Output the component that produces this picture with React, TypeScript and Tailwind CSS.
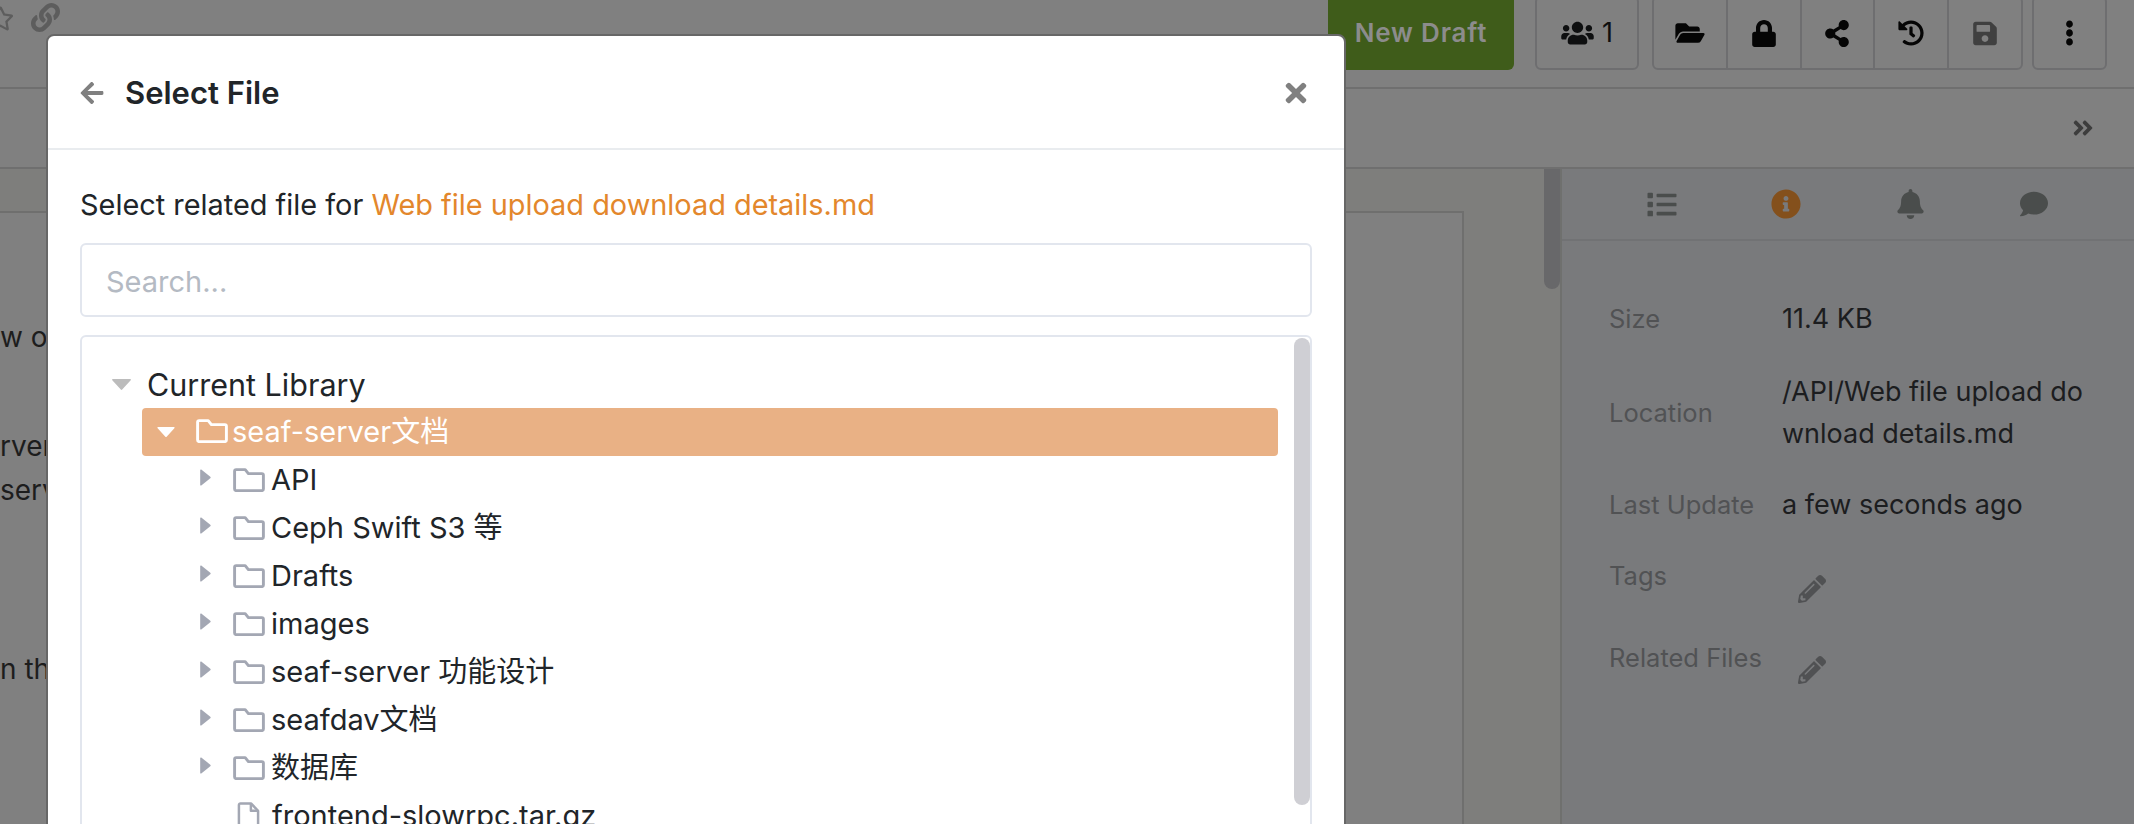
import React from "react";
import {
  FaRegStar, FaLink, FaUsers, FaFolderOpen, FaLock, FaShareAlt, FaHistory, FaSave, FaEllipsisV,
  FaAngleDoubleRight, FaList, FaInfoCircle, FaBell, FaComment, FaPencilAlt, FaArrowLeft, FaTimes,
} from "react-icons/fa";

const FONT = "font-['Inter','Noto_Sans_CJK_SC',sans-serif]";

function Folder({ className }: { className: string }) {
  return (
    <svg viewBox="0 0 32 24" className={className} fill="none" stroke="currentColor" strokeWidth="2.9" strokeLinejoin="round">
      <path d="M1.6 21V3.2c0-.9.7-1.6 1.6-1.6h9l3.2 4h13.4c.9 0 1.6.7 1.6 1.6V21c0 .9-.7 1.6-1.6 1.6H3.2c-.9 0-1.6-.7-1.6-1.6z" />
    </svg>
  );
}

function FileIcon() {
  return (
    <svg viewBox="0 0 24 30" className="w-[23px] h-[29px] text-[#a3a7b3]" fill="none" stroke="currentColor" strokeWidth="2.6" strokeLinejoin="round">
      <path d="M2 3c0-.9.7-1.6 1.6-1.6h11L22 9v18c0 .9-.7 1.6-1.6 1.6H3.600c-.9 0-1.6-.7-1.600-1.600z" />
      <path d="M14.500 1.500V9H22" />
    </svg>
  );
}

function CaretRight() {
  return (
    <svg viewBox="0 0 10 16" className="w-[11px] h-[17px] text-[#a3a7b3] -mt-[6px] shrink-0" fill="currentColor">
      <path d="M1 0.5 9.500 7.200c.5.400.5 1.200 0 1.600L1 15.500c-.4.300-1 0-1-.5V1c0-.5.600-.8 1-.5z" />
    </svg>
  );
}

function CaretDown({ className }: { className: string }) {
  return (
    <svg viewBox="0 0 19 11" className={className} fill="currentColor">
      <path d="M0.800 0h17.400c.7 0 1 .8.500 1.300l-8.500 9.300c-.4.400-1 .4-1.400 0L.300 1.300C-.200.800.100 0 .800 0z" />
    </svg>
  );
}

function TreeFolder({ name }: { name: string }) {
  return (
    <div className="flex items-center h-[48px] pl-[118px]">
      <CaretRight />
      <Folder className="w-[32px] h-[24px] ml-[22px] text-[#a3a7b3] shrink-0" />
      <span className="ml-[6px] text-[#212529]">{name}</span>
    </div>
  );
}

function ToolBtn({ children, border = true }: { children: React.ReactNode; border?: boolean }) {
  return (
    <div className={`flex-1 flex items-center justify-center ${border ? "border-r-2 border-[#6e6e70]" : ""}`}>
      {children}
    </div>
  );
}

function Detail({ label, children, className }: { label: string; children: React.ReactNode; className: string }) {
  return (
    <div className={`flex ${className}`}>
      <div className="w-[173px] shrink-0 text-[#515254] text-[25.500px]">{label}</div>
      <div className="flex-1 text-[#1c1d1f] text-[27px]">{children}</div>
    </div>
  );
}

export default function App() {
  return (
    <div className={`relative w-[2134px] h-[824px] overflow-hidden bg-[#808080] flex flex-col text-[29px] leading-[42px] ${FONT}`}>
      {/* Page header */}
      <header className="h-[89px] shrink-0 border-b-2 border-[#6f6f6f] flex items-end justify-between pb-[17px] pr-[27px]">
        <div className="self-start flex items-center gap-[17px] -ml-[13px] mt-[2px] text-[#5d5d5d]">
          <FaRegStar className="w-[27px] h-[27px] mt-[3px]" />
          <FaLink className="w-[29px] h-[29px]" />
        </div>
        <div className="flex items-end h-[74px]">
          <div className="w-[186px] h-[74px] bg-[#3f5c1a] rounded-b-[6px] flex items-center justify-center font-semibold text-[#8c8c8c] tracking-[0.8px] text-[26px]">
            New Draft
          </div>
          <div className="w-[104px] h-[74px] ml-[21px] border-2 border-[#6e6e70] rounded-[6px] flex items-center justify-center gap-[8px] text-[#0e0f10] text-[27px]">
            <FaUsers className="w-[33px] h-[26px]" />
            <span>1</span>
          </div>
          <div className="w-[371px] h-[74px] ml-[13px] border-2 border-[#6e6e70] rounded-[6px] flex text-[#050505]">
            <ToolBtn><FaFolderOpen className="w-[30px] h-[26px]" /></ToolBtn>
            <ToolBtn><FaLock className="w-[24px] h-[27px]" /></ToolBtn>
            <ToolBtn><FaShareAlt className="w-[24px] h-[27px]" /></ToolBtn>
            <ToolBtn><FaHistory className="w-[26px] h-[26px]" /></ToolBtn>
            <ToolBtn border={false}><FaSave className="w-[24px] h-[27px] text-[#404040]" /></ToolBtn>
          </div>
          <div className="w-[75px] h-[74px] ml-[9px] border-2 border-[#6e6e70] rounded-[6px] flex items-center justify-center text-[#050505]">
            <FaEllipsisV className="w-[9px] h-[26px]" preserveAspectRatio="none" />
          </div>
        </div>
      </header>

      {/* Secondary bar */}
      <div className="h-[80px] shrink-0 border-b-2 border-[#6f6f6f] flex items-center justify-end pr-[38px]">
        <FaAngleDoubleRight className="w-[26px] h-[24px] text-[#3d3d3d]" />
      </div>

      {/* Body */}
      <div className="flex-1 flex min-h-0">
        <main className="w-[1544px] shrink-0 bg-[#7e7e7c] pt-[42px] overflow-hidden">
          <div className="w-[1464px] h-full bg-[#808080] border-t-2 border-r-2 border-[#6f6f6e] pt-[103px] text-[28px] text-[#1d1d1d] whitespace-nowrap">
            <p>w of the</p>
            <p className="mt-[67px]">rver and</p>
            <p className="mt-[2px]">server</p>
            <p className="mt-[137px]">n the</p>
          </div>
        </main>
        <div className="w-[16px] shrink-0 bg-[#7e7e7c]">
          <div className="h-[120px] bg-[#68686a] rounded-b-full" />
        </div>
        <aside className="flex-1 bg-[#797a7c] border-l-2 border-[#6f706e]">
          <div className="h-[72px] border-b-2 border-[#717274] px-[38px] grid grid-cols-4 items-center justify-items-center">
            <FaList className="w-[32px] h-[29px] text-[#4a4d4c]" />
            <FaInfoCircle className="w-[30px] h-[30px] text-[#84501c]" />
            <FaBell className="w-[27px] h-[30px] text-[#4a4d4c]" />
            <FaComment className="w-[30px] h-[28px] text-[#4a4d4c]" />
          </div>
          <div className="pl-[47px] pr-[20px] pt-[57px]">
            <Detail label="Size" className="items-center">11.4 KB</Detail>
            <Detail label="Location" className="items-center mt-[31px]">
              /API/Web file upload do<br />wnload details.md
            </Detail>
            <Detail label="Last Update" className="items-center mt-[29px]">a few seconds ago</Detail>
            <Detail label="Tags" className="items-start mt-[29px]">
              <FaPencilAlt className="w-[28px] h-[28px] ml-[16px] mt-[20px] text-[#505153]" />
            </Detail>
            <Detail label="Related Files" className="items-start mt-[34px]">
              <FaPencilAlt className="w-[28px] h-[28px] ml-[16px] mt-[19px] text-[#505153]" />
            </Detail>
          </div>
        </aside>
      </div>

      {/* Modal */}
      <div className="absolute left-[46px] top-[34px] w-[1300px] h-[830px] bg-white border-2 border-[#676767] rounded-[8px] overflow-hidden">
        <div className="h-[114px] border-b-2 border-[#e9ecef] flex items-center justify-between pl-[30px] pr-[33px] pt-[2px]">
          <div className="flex items-center gap-[19px]">
            <FaArrowLeft className="w-[28px] h-[26px] text-[#808080]" />
            <h2 className="text-[31px] font-semibold text-[#212529]">Select File</h2>
          </div>
          <FaTimes className="w-[30px] h-[30px] text-[#808080]" />
        </div>
        <div className="px-[32px] pt-[34px]">
          <p className="text-[28.900px] text-[#212529]">
            Select related file for <span className="text-[#e3872c]">Web file upload download details.md</span>
          </p>
          <div className="h-[74px] mt-[17px] border-2 border-[#e2e6ee] rounded-[6px] flex items-center pl-[24px] pt-[3px] text-[#b4bac3]">
            Search...
          </div>
          <div className="relative h-[600px] mt-[18px] border-2 border-[#e2e6ee] rounded-[6px] pt-[24px]">
            <div className="absolute right-0 top-[1px] w-[16px] h-[467px] bg-[#cfcfd4] rounded-full" />
            <div className="flex items-center h-[47px] pl-[30px]">
              <CaretDown className="w-[19px] h-[11px] text-[#bcbcbc] shrink-0" />
              <span className="ml-[16px] text-[30.500px] text-[#212529]">Current Library</span>
            </div>
            <div className="flex items-center h-[48px] ml-[60px] mr-[32px] pl-[15px] bg-[#e9b185] rounded-[4px] text-white">
              <CaretDown className="w-[18px] h-[10px] shrink-0 -mt-[1px]" />
              <Folder className="w-[32px] h-[24px] ml-[21px] -mt-[2px] shrink-0" />
              <span className="ml-[4px]">seaf-server文档</span>
            </div>
            <div>
              <TreeFolder name="API" />
              <TreeFolder name="Ceph Swift S3 等" />
              <TreeFolder name="Drafts" />
              <TreeFolder name="images" />
              <TreeFolder name="seaf-server 功能设计" />
              <TreeFolder name="seafdav文档" />
              <TreeFolder name="数据库" />
              <div className="flex items-center h-[48px] pl-[155px]">
                <FileIcon />
                <span className="ml-[12px] text-[#212529]">frontend-slowrpc.tar.gz</span>
              </div>
            </div>
          </div>
        </div>
      </div>
    </div>
  );
}
